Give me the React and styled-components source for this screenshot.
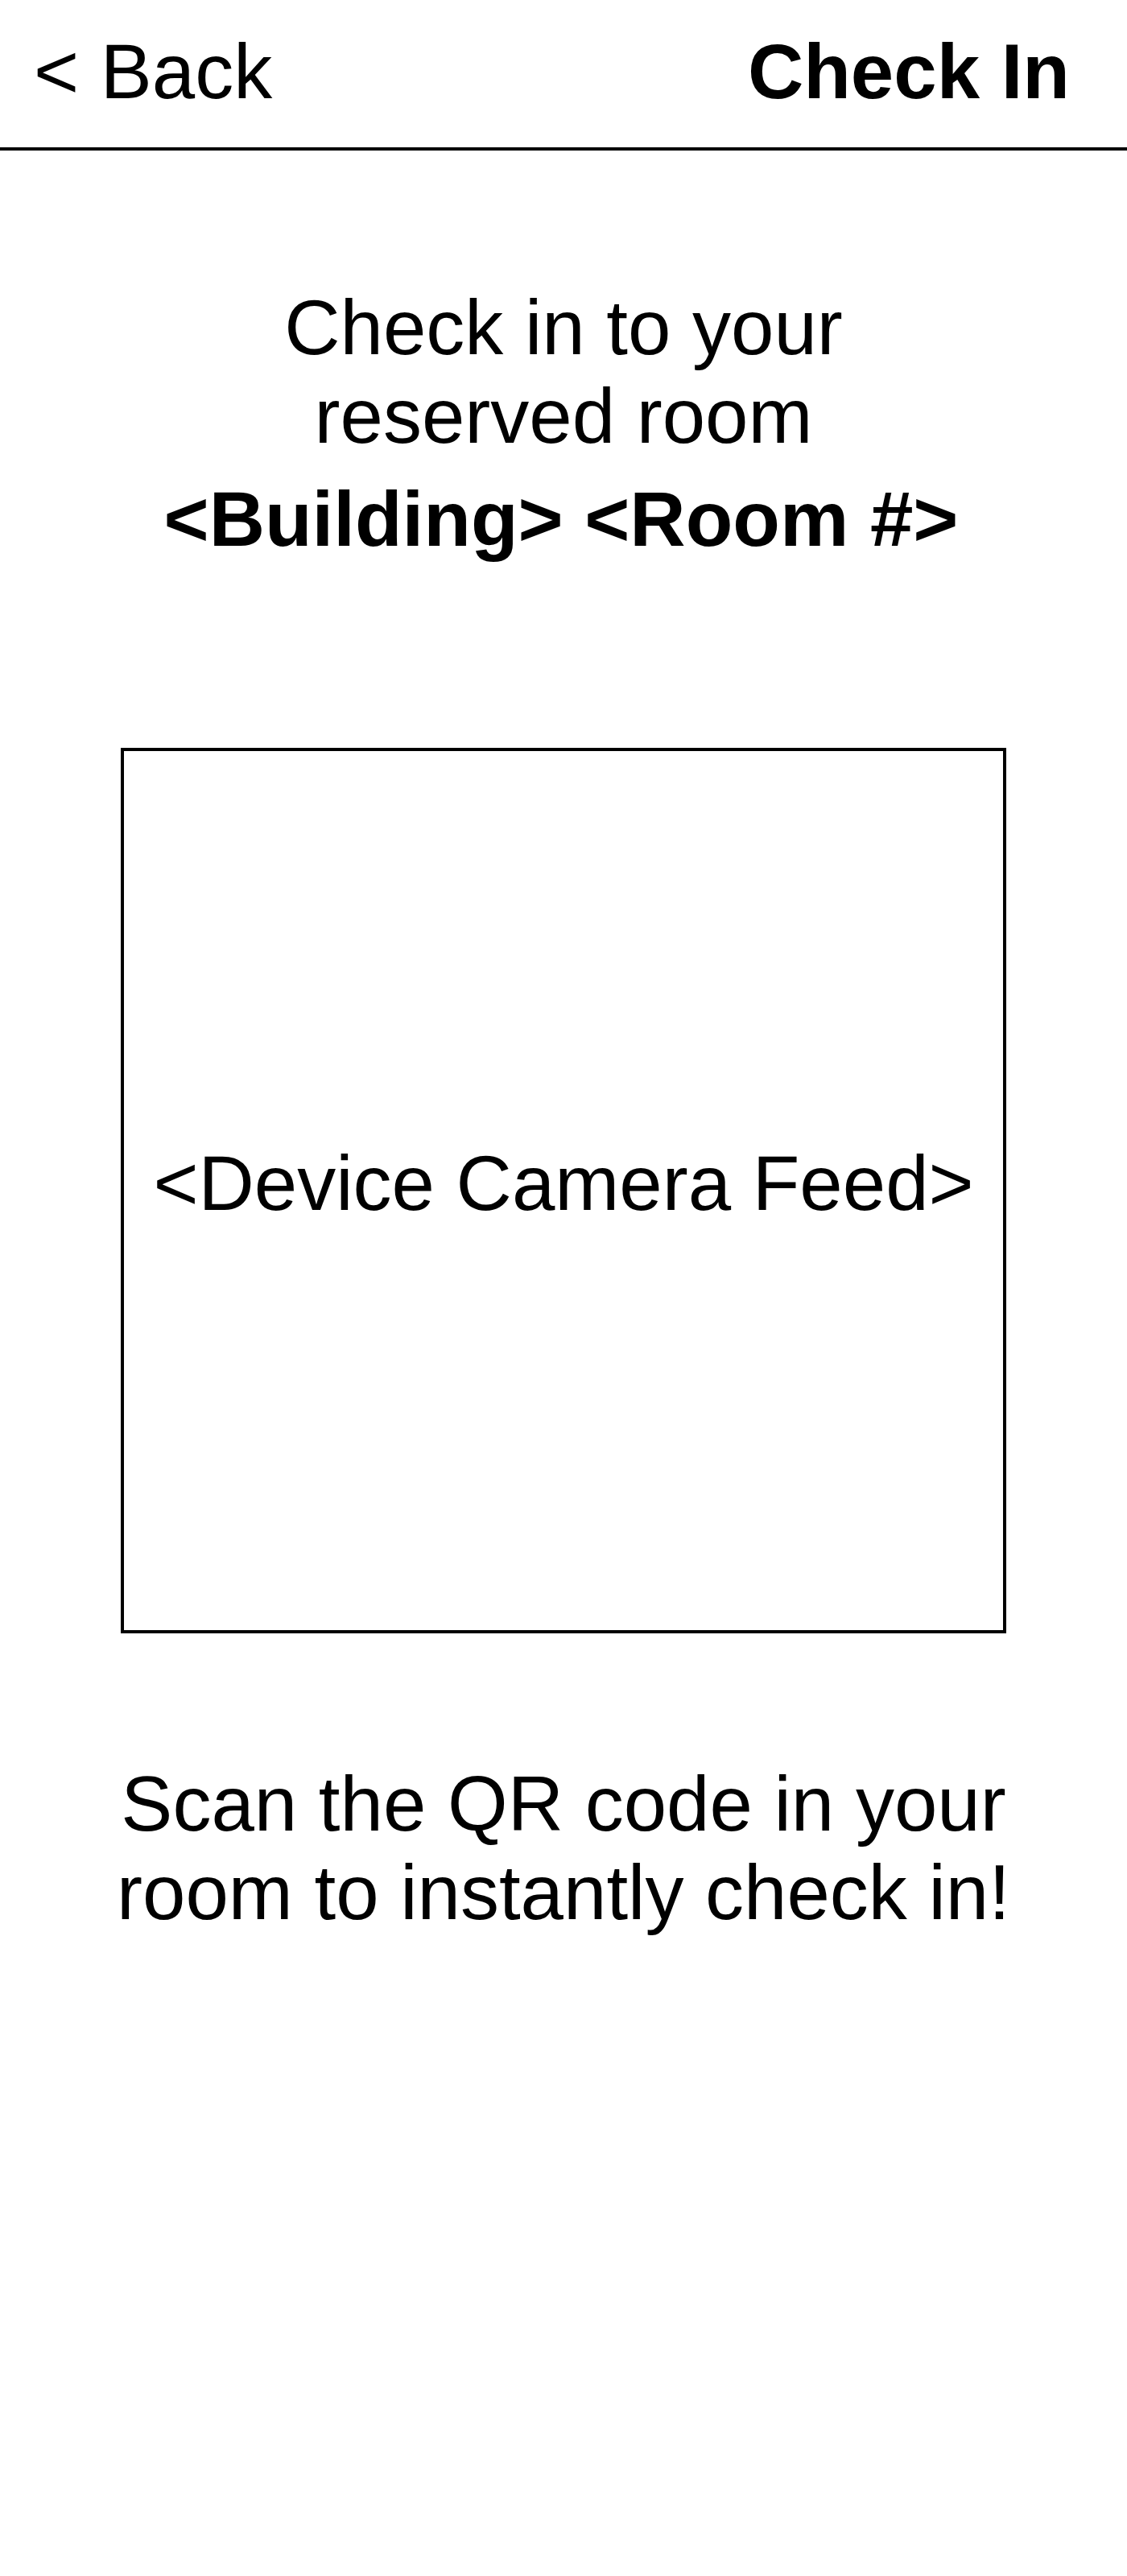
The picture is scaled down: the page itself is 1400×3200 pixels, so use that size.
import React from 'react'
import styled, { createGlobalStyle } from 'styled-components'

const GlobalStyle = createGlobalStyle`
  html, body {
    margin: 0;
    padding: 0;
    background: #ffffff;
  }
  body {
    font-family: "Liberation Sans", Arial, sans-serif;
    color: #000000;
  }
`

function App() {
  return (
    <Page>
      <GlobalStyle />
      <Header>
        <BackLink href='#'>&lt; Back</BackLink>
        <Title>Check In</Title>
      </Header>

      <Intro>
        <IntroText>Check in to your reserved room</IntroText>
        <RoomName>&lt;Building&gt; &lt;Room #&gt;</RoomName>
      </Intro>

      <CameraFeed>&lt;Device Camera Feed&gt;</CameraFeed>

      <Hint>Scan the QR code in your room to instantly check in!</Hint>
    </Page>
  )
}

const Page = styled.div`
  width: 1400px;
  min-height: 3200px;
  display: flex;
  flex-direction: column;
  align-items: center;
  font-size: 96px;
  line-height: 110px;
`
const Header = styled.header`
  align-self: stretch;
  display: flex;
  justify-content: space-between;
  align-items: center;
  padding: 34px 71px 39px 42px;
  border-bottom: 4px solid #000;
`
const BackLink = styled.a`
  color: #000;
  text-decoration: none;
`
const Title = styled.h1`
  margin: 0;
  font-size: 96px;
  font-weight: 700;
`
const Intro = styled.section`
  margin-top: 165px;
  width: 1100px;
  display: flex;
  flex-direction: column;
  align-items: center;
  text-align: center;
`
const IntroText = styled.p`
  margin: 0;
  max-width: 900px;
`
const RoomName = styled.p`
  margin: 18px 6px 0 0;
  font-weight: 700;
`
const CameraFeed = styled.div`
  margin-top: 229px;
  box-sizing: border-box;
  width: 1100px;
  height: 1100px;
  padding-bottom: 18px;
  border: 4px solid #000;
  display: flex;
  align-items: center;
  justify-content: center;
  text-align: center;
`
const Hint = styled.p`
  margin: 157px 0 0;
  width: 1140px;
  text-align: center;
`

export default App
